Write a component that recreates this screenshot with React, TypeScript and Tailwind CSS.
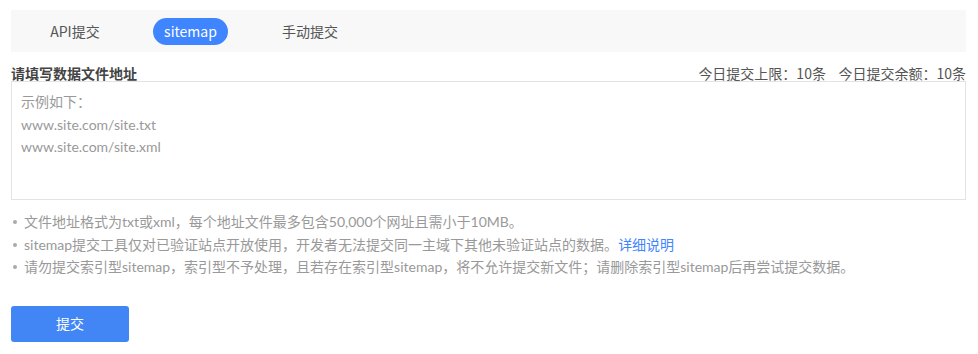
import React from "react";

const font = { fontFamily: '"Microsoft YaHei", "Noto Sans CJK SC", "Noto Sans", sans-serif' };
const latin = { fontFamily: 'Lato, "Noto Sans CJK SC", sans-serif' };

export default function App() {
  return (
    <div className="w-[978px] h-[354px] bg-white pt-[10px] pl-[11px] pr-[12px] text-[14px]" style={font}>
      <div className="h-[42px] bg-[#f8f8f8] flex items-center">
        <div className="w-[128px] h-[27px] flex items-center justify-center text-[#555]">API提交</div>
        <div className="ml-[14px] w-[75px] h-[27px] rounded-full bg-[#3f85ff] text-white flex items-center justify-center">sitemap</div>
        <div className="w-[164px] h-[27px] flex items-center justify-center text-[#555]">手动提交</div>
      </div>
      <div className="mt-[13px] flex items-end justify-between leading-[16px]">
        <div className="font-bold text-[#444]">请填写数据文件地址</div>
        <div className="text-[#555]">今日提交上限：10条&nbsp;&nbsp;&nbsp;&nbsp;今日提交余额：10条</div>
      </div>
      <div className="h-[119px] border border-[#e3e3e3] px-[9px] pt-[9px] leading-[22.5px] text-[#999]" style={latin}>
        <div>示例如下：</div>
        <div>www.site.com/site.txt</div>
        <div>www.site.com/site.xml</div>
      </div>
      <ul className="mt-[11px] text-[14px] leading-[22.5px] text-[#999]" style={latin}>
        <li className="flex items-center">
          <span className="w-[4px] h-[4px] rounded-full bg-[#aaa] ml-[2px] mr-[7px]"></span>
          文件地址格式为txt或xml，每个地址文件最多包含50,000个网址且需小于10MB。
        </li>
        <li className="flex items-center">
          <span className="w-[4px] h-[4px] rounded-full bg-[#aaa] ml-[2px] mr-[7px]"></span>
          sitemap提交工具仅对已验证站点开放使用，开发者无法提交同一主域下其他未验证站点的数据。
          <span className="text-[#3f85ff]">详细说明</span>
        </li>
        <li className="flex items-center">
          <span className="w-[4px] h-[4px] rounded-full bg-[#aaa] ml-[2px] mr-[7px]"></span>
          请勿提交索引型sitemap，索引型不予处理，且若存在索引型sitemap，将不允许提交新文件；请删除索引型sitemap后再尝试提交数据。
        </li>
      </ul>
      <button className="mt-[27px] w-[118px] h-[36px] rounded-[3px] bg-[#4285f4] text-white flex items-center justify-center">
        提交
      </button>
    </div>
  );
}
